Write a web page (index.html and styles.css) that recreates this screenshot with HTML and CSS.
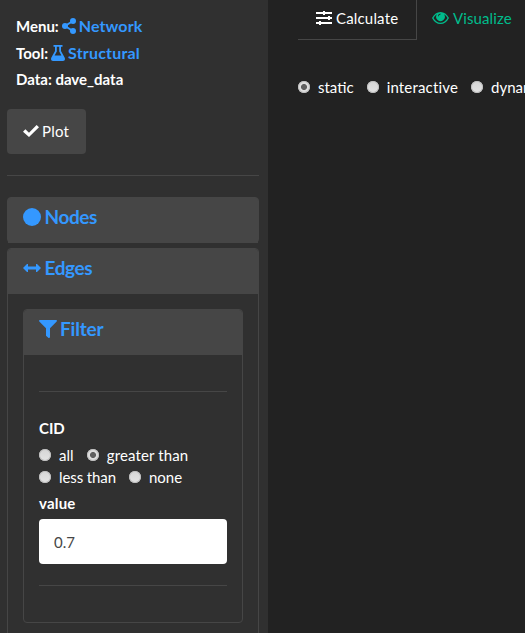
FILE: index.html
```html
<!DOCTYPE html>
<html lang="en">
<head>
<meta charset="utf-8">
<title>Network</title>
<link rel="stylesheet" href="styles.css">
</head>
<body>
<div class="app">
  <aside class="sidebar">
    <div class="crumbs">
      <div class="crumb">Menu: <a><svg class="i-share" viewBox="0 0 14 16"><path d="M11 3 3 8l8 5" fill="none" stroke="currentColor" stroke-width="2"/><circle cx="11" cy="3" r="3"/><circle cx="3" cy="8" r="3"/><circle cx="11" cy="13" r="3"/></svg><span class="t-network">Network</span></a></div>
      <div class="crumb">Tool: <a><svg class="i-flask" viewBox="0 0 14 16"><path fill-rule="evenodd" d="M2.500 0h9v1.800H10v4.200l3.600 6.600C14.500 14.500 13.700 16 12 16H2C.3 16-.5 14.500.4 12.600L4 6V1.800H2.500zM5.800 1.800v4.700L3.600 10.500h6.800L8.200 6.500V1.800z"/></svg><span class="t-structural">Structural</span></a></div>
      <div class="crumb"><span class="t-data">Data: dave_data</span></div>
    </div>
    <button class="btn"><svg class="i-check" viewBox="0 0 16 12"><path d="M0 6.700 2.400 4.300 6 7.700 13.600 0 16 2.300 6 12z"/></svg><span class="t-plot">Plot</span></button>
    <hr class="rule">
    <section class="panel closed"><h4 class="head"><svg class="i-circle" viewBox="0 0 18 18"><circle cx="9" cy="9" r="9"/></svg><span class="t-nodes">Nodes</span></h4></section>
    <section class="panel edges">
      <h4 class="head"><svg class="i-arrows" viewBox="0 0 18 8"><path d="M0 4 4 0h1v2.500h8V0h1l4 4-4 4h-1V5.500H5V8H4z"/></svg><span class="t-edges">Edges</span></h4>
      <div class="body">
        <section class="panel filter">
          <h4 class="head"><svg class="i-filter" viewBox="0 0 18 18"><path d="M.7 0h16.600q1 .5.4 1.500L11 8.200V17q-.3 1.200-1.400 1L7 15.800V8.200L.3 1.500Q-.2.500.7 0z"/></svg><span class="t-filter">Filter</span></h4>
          <div class="body">
            <hr class="rule">
            <div class="label cid"><span class="t-cid">CID</span></div>
            <div class="radios">
              <label class="opt"><i class="dot"></i><span class="t-all">all</span></label>
              <label class="opt"><i class="dot on"></i><span class="t-greater">greater than</span></label>
            </div>
            <div class="radios">
              <label class="opt"><i class="dot"></i><span class="t-less">less than</span></label>
              <label class="opt"><i class="dot"></i><span class="t-none">none</span></label>
            </div>
            <div class="label value"><span class="t-value">value</span></div>
            <div class="field">0.7</div>
            <hr class="rule last">
          </div>
        </section>
      </div>
    </section>
  </aside>
  <main class="main">
    <nav class="tabs">
      <a class="tab active"><svg class="i-sliders" viewBox="0 0 16 14"><path d="M0 1h16v2H0zM0 6h16v2H0zM0 11h16v2H0zM7 0h2v4H7zM12 5h2v4h-2zM3 10h2v4H3z"/></svg><span class="t-calc">Calculate</span></a>
      <a class="tab"><svg class="i-eye" viewBox="0 0 17 12"><path fill-rule="evenodd" d="M0 6Q3.200 0 8.500 0T17 6Q13.800 12 8.500 12T0 6zm1.500 0q2.700 4.700 7 4.700t7-4.700Q14.100 3.300 12 2.200A4.300 4.300 0 1 1 5 2.200Q2.900 3.300 1.500 6zM8.500 1.500Q6 1.800 6 4.300h.8q0-1.600 1.700-1.800z"/></svg><span class="t-vis">Visualize</span></a>
    </nav>
    <div class="radios modes">
      <label class="opt"><i class="dot on"></i><span class="t-static">static</span></label>
      <label class="opt"><i class="dot"></i><span class="t-inter">interactive</span></label>
      <label class="opt"><i class="dot"></i><span class="t-dyn">dynamic</span></label>
    </div>
  </main>
</div>
</body>
</html>
```
FILE: styles.css
```css
* { box-sizing: border-box; }
body { margin: 0; background: #222; color: #fff; font: 15px/22px Lato, sans-serif; overflow: hidden; }
svg { display: block; flex: none; fill: currentColor; }
span { white-space: nowrap; }
.app { display: flex; height: 633px; overflow: hidden; }
.sidebar { width: 268px; flex: none; background: #303030; padding: 13px 9px 0 7px; }
.crumbs { padding-left: 9px; font-weight: 700; }
.crumb { display: flex; align-items: center; height: 26.5px; gap: 3px; }
.crumb a { display: flex; align-items: center; gap: 3px; color: #3498ff; font-size: 16px; }
.t-network { letter-spacing: .1px; }
.t-structural { letter-spacing: .2px; }
.i-share { width: 14px; height: 16px; }
.i-flask { width: 14px; height: 16px; }
.btn { display: flex; align-items: center; gap: 3px; width: 79px; height: 45px; margin: 16.5px 0 0; padding: 0 0 1px 16px; border: 0; border-radius: 4px; background: #464646; color: #fff; font: inherit; }
.t-plot { letter-spacing: .2px; }
.i-check { width: 16px; height: 12px; }
.rule { height: 1px; margin: 21px 0; border: 0; background: #464646; }
.panel { border: 1px solid #464646; border-radius: 4px; }
.closed { height: 46px; margin-bottom: 5px; background: #464646; }
.edges { height: 420px; }
.head { display: flex; align-items: center; gap: 3px; height: 45px; margin: 0; padding: 0 15px 7px; background: #464646; color: #3498ff; font-size: 19px; font-weight: 700; letter-spacing: -.4px; border-radius: 3px 3px 0 0; }
.t-filter { letter-spacing: -.2px; }
.body { padding: 15px; }
.i-circle, .i-filter { width: 18px; height: 18px; }
.head .t-nodes, .head .t-edges { margin-left: .5px; }
.i-arrows { width: 18px; height: 8px; }
.filter { height: 314px; }
.filter .body { padding-top: 36px; }
.filter .rule { margin: 0; }
.label { font-weight: 700; }
.cid { margin: 25px 0 5px; height: 22px; }
.radios { display: flex; height: 22px; gap: 13px; }
.opt { display: flex; align-items: center; gap: 8px; }
.t-all { margin-right: .3px; }
.t-greater { letter-spacing: .12px; }
.t-less { letter-spacing: -.1px; }
.t-value { letter-spacing: .2px; }
.t-inter { letter-spacing: .17px; }
.t-calc { letter-spacing: .17px; }
.t-vis { letter-spacing: .1px; }
.dot { flex: none; width: 12px; height: 12px; border-radius: 50%; background: linear-gradient(#d5d5d5, #e4e4e4); box-shadow: inset 0 0 0 1px #bdbdbd; }
.dot.on { background: radial-gradient(circle, #606060 0 2.600px, #dedede 3.400px); }
.value { margin: 4px 0; height: 23px; }
.field { height: 45px; padding: 0 15px; border-radius: 4px; background: #fff; color: #464646; line-height: 46px; }
.filter .last { margin-top: 21px; }
.main { flex: 1; min-width: 0; padding-left: 30px; overflow: hidden; }
.tabs { display: flex; height: 40px; }
.tab { display: flex; align-items: center; gap: 4px; height: 40px; padding: 0 0 4px 15px; color: #00bc8c; }
.tab.active { width: 119px; padding: 0 0 3px 18px; border-right: 1px solid #464646; border-bottom: 1px solid #464646; color: #fff; }
.i-sliders { width: 16px; height: 14px; }
.i-eye { width: 17px; height: 12px; }
.modes { margin-top: 36px; }
```
